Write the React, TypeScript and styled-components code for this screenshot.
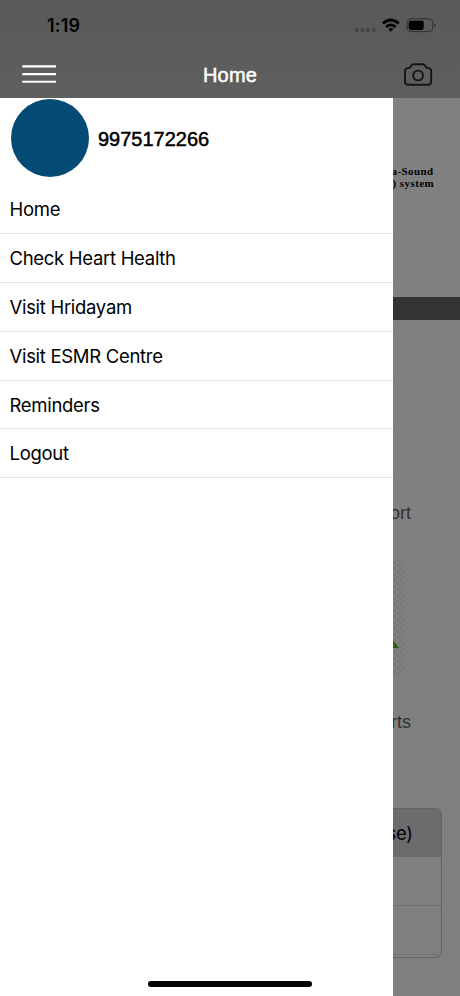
import React from "react";
import styled, { createGlobalStyle } from "styled-components";

const GlobalStyle = createGlobalStyle`
  * { box-sizing: border-box; }
  body { margin: 0; background: #808080; }
`;

const Screen = styled.div`
  position: relative;
  display: flex;
  flex-direction: column;
  width: 460px;
  height: 996px;
  overflow: hidden;
  background: #808080;
  color: #000;
  font-family: Inter, "Liberation Sans", sans-serif;
`;

const Header = styled.header`
  flex: none;
  height: 98px;
  background: linear-gradient(#595959, #5f5f5f);
`;

const StatusBar = styled.div`
  display: flex;
  align-items: center;
  justify-content: space-between;
  height: 51px;
  padding: 0 24px 0 47px;
`;

const Clock = styled.span`
  font-size: 18px;
  font-weight: 600;
  letter-spacing: 0.15px;
`;

const StatusIcons = styled.svg`
  display: block;
  width: 82px;
  height: 20px;
`;

const NavBar = styled.nav`
  display: grid;
  grid-template-columns: 40px 1fr 40px;
  align-items: center;
  height: 47px;
  padding: 0 24px 0 19px;
`;

const NavTitle = styled.h1`
  margin: 0;
  padding-left: 5px;
  text-align: center;
  color: #fff;
  font: 20px/46px "Liberation Sans", Arial, sans-serif;
  letter-spacing: 0.2px;
  -webkit-text-stroke: 0.5px #fff;
`;

const NavIcon = styled.svg`
  display: block;
  width: 40px;
  height: 40px;
`;

const Body = styled.main`
  display: flex;
  flex: 1;
  min-height: 0;
`;

const Drawer = styled.aside`
  flex: none;
  width: 393px;
  background: #fff;
`;

const Profile = styled.div`
  display: flex;
  align-items: flex-start;
  gap: 9px;
  height: 87.4px;
  padding: 1px 0 0 11px;
`;

const Avatar = styled.div`
  width: 78px;
  height: 78px;
  border-radius: 50%;
  background: #034a75;
`;

const Phone = styled.span`
  font: 20px/80px "Liberation Sans", Arial, sans-serif;
  -webkit-text-stroke: 0.5px #000;
`;

const Menu = styled.ul`
  margin: 0;
  padding: 0;
  list-style: none;
`;

const MenuItem = styled.li`
  height: 48.8px;
  padding-left: 9.5px;
  border-bottom: 1px solid #e3e3e3;
  font-size: 18.5px;
  line-height: 49px;
  letter-spacing: -0.3px;
  white-space: nowrap;
`;

const Page = styled.section`
  display: flex;
  flex: 1;
  flex-direction: column;
  min-width: 0;
  overflow: hidden;
`;

const Banner = styled.div`
  display: flex;
  flex-direction: column;
  align-items: flex-end;
  height: 199px;
  flex: none;
  padding: 68px 26px 0 0;
`;

const BannerLine = styled.span`
  font: bold 9.5px/12px "Liberation Serif", "Times New Roman", serif;
  letter-spacing: 0.4px;
  white-space: nowrap;
  transform: scaleX(1.15);
  transform-origin: right;
`;

const Band = styled.div`
  flex: none;
  height: 23px;
  background: #333;
`;

const Tiles = styled.div`
  display: flex;
  flex: none;
  flex-direction: column;
  align-items: flex-end;
  height: 488px;
  padding-top: 181px;
`;

const TileLabel = styled.span`
  margin-right: 49px;
  color: #303030;
  font: 18px/24px "Liberation Sans", Arial, sans-serif;
  white-space: nowrap;
`;

const ReportPicture = styled.svg`
  display: block;
  width: 67px;
  height: 120px;
  margin: 33px 0 32px;
`;

const Table = styled.div`
  flex: none;
  width: 49px;
  height: 150px;
  overflow: hidden;
  border: 1px solid #646466;
  border-left: 0;
  border-radius: 0 6px 6px 0;
`;

const TableHead = styled.div`
  display: flex;
  justify-content: flex-end;
  height: 48px;
  padding-right: 28.5px;
  background: #6c6c6f;
  font-size: 18.5px;
  letter-spacing: -0.4px;
  line-height: 49px;
  white-space: nowrap;
`;

const TableRow = styled.div`
  height: 49px;
  border-bottom: 1px solid #707072;
`;

const HomeIndicator = styled.div`
  position: absolute;
  bottom: 9px;
  left: 148px;
  width: 164px;
  height: 6px;
  border-radius: 3px;
  background: #000;
`;

const items = [
  "Home",
  "Check Heart Health",
  "Visit Hridayam",
  "Visit ESMR Centre",
  "Reminders",
  "Logout",
];

export default function App() {
  return (
    <>
      <GlobalStyle />
      <Screen>
        <Header>
          <StatusBar>
            <Clock>1:19</Clock>
            <StatusIcons viewBox="354 16 82 20" aria-hidden="true">
              <g fill="#444">
                <rect x="355" y="28" width="3.4" height="4" rx="1" />
                <rect x="360.7" y="28" width="3.4" height="4" rx="1" />
                <rect x="366.3" y="28" width="3.4" height="4" rx="1" />
                <rect x="372" y="28" width="3.4" height="4" rx="1" />
              </g>
              <g fill="none" stroke="#000" strokeWidth="2.7">
                <path d="M382.9 23.4Q390.8 16.6 398.7 23.4" />
                <path d="M386 27Q390.8 22.8 395.6 27" />
              </g>
              <path d="M388.2 29Q390.8 27 393.4 29L390.8 31.8Z" />
              <rect x="407.1" y="18.9" width="25.6" height="12.7" rx="3.7" fill="none" stroke="#303030" />
              <rect x="408.7" y="20.7" width="15" height="9.2" rx="1.8" />
              <path d="M434.3 23v4.6q1.4-.8 1.4-2.3t-1.4-2.3" fill="#303030" />
            </StatusIcons>
          </StatusBar>
          <NavBar>
            <NavIcon viewBox="19 54.5 40 40" role="img" aria-label="Menu">
              <path d="M22.3 65.9H56M22.3 73.6H56M22.3 81.3H56" stroke="#fff" strokeWidth="2.1" />
            </NavIcon>
            <NavTitle>Home</NavTitle>
            <NavIcon viewBox="396 54.5 40 40" role="img" aria-label="Camera">
              <g fill="none" stroke="#141414" strokeWidth="1.9" strokeLinejoin="round">
                <path d="M408.2 67.6C409.7 67.6 410.2 67 410.9 65.8L411.5 64.8Q412.2 63.7 413.5 63.7H422.8Q424.1 63.7 424.8 64.8L425.4 65.8C426.1 67 426.6 67.6 428.1 67.6Q431.2 67.6 431.2 70.7V81Q431.2 84.2 428 84.2H408.2Q405 84.2 405 81V70.7Q405 67.6 408.2 67.6Z" />
                <circle cx="418.1" cy="75" r="4.9" />
              </g>
            </NavIcon>
          </NavBar>
        </Header>
        <Body>
          <Drawer>
            <Profile>
              <Avatar />
              <Phone>9975172266</Phone>
            </Profile>
            <Menu>
              {items.map((label) => (
                <MenuItem key={label}>{label}</MenuItem>
              ))}
            </Menu>
          </Drawer>
          <Page>
            <Banner>
              <BannerLine>a-Sound</BannerLine>
              <BannerLine>) system</BannerLine>
            </Banner>
            <Band />
            <Tiles>
              <TileLabel>ort</TileLabel>
              <ReportPicture viewBox="393 558 67 120" aria-hidden="true">
                <defs>
                  <pattern id="checks" width="6" height="6" patternUnits="userSpaceOnUse">
                    <path d="M0 0h3v3H0zM3 3h3v3H3z" fill="#797979" />
                  </pattern>
                </defs>
                <path d="M393 560h9l2 3v113h-11z" fill="url(#checks)" />
                <path d="M393 640.5L399 648H393Z" fill="#205c09" />
                <path d="M393 643.5L395.5 646.7H393Z" fill="#3e7420" />
              </ReportPicture>
              <TileLabel>rts</TileLabel>
            </Tiles>
            <Table>
              <TableHead>se)</TableHead>
              <TableRow />
              <TableRow />
            </Table>
          </Page>
        </Body>
        <HomeIndicator />
      </Screen>
    </>
  );
}
